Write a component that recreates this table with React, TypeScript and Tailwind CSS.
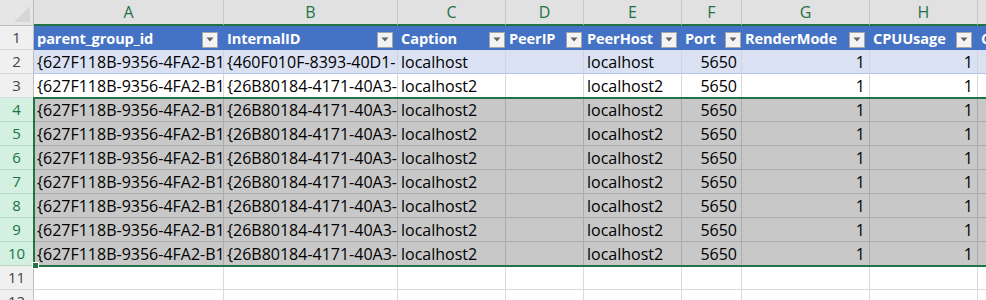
import React from "react";

type Kind = "head" | "band" | "plain" | "sel" | "empty";

const GRID =
  "grid grid-cols-[34px_190px_174px_108px_78px_98px_60px_128px_108px_60px]";

const letters = ["A", "B", "C", "D", "E", "F", "G", "H", "I"];
const rightCols = [5, 6, 7];

// gap between filter button and the column's right edge, as in the sheet
const ddMargin = [
  "mr-[6px]",
  "mr-[5px]",
  "mr-[1px]",
  "mr-[2px]",
  "mr-[5px]",
  "mr-[1px]",
  "mr-[5px]",
  "mr-[6px]",
];

const headers = [
  "parent_group_id",
  "InternalID",
  "Caption",
  "PeerIP",
  "PeerHost",
  "Port",
  "RenderMode",
  "CPUUsage",
  "C",
];

const first = [
  "{627F118B-9356-4FA2-B1",
  "{460F010F-8393-40D1-",
  "localhost",
  "",
  "localhost",
  "5650",
  "1",
  "1",
  "",
];

const second = [
  "{627F118B-9356-4FA2-B1",
  "{26B80184-4171-40A3-",
  "localhost2",
  "",
  "localhost2",
  "5650",
  "1",
  "1",
  "",
];

const empty = ["", "", "", "", "", "", "", "", ""];

const cellKind: Record<Kind, string> = {
  head: "bg-[#4472c4] text-white font-bold text-[14.6px] tracking-[-0.1px]",
  band: "bg-[#d9e1f2] text-black text-[16px] border-r border-b border-r-[#d0d4dc] border-b-[#b4c6e7]",
  plain: "bg-white text-black text-[16px] border-r border-b border-r-[#d9d9d9] border-b-[#d9d9d9]",
  sel: "bg-[#c8c8c8] text-black text-[16px] border-r border-b border-[#ababab]",
  empty: "bg-white border-r border-b border-[#dadada]",
};

function Dropdown({ i }: { i: number }) {
  return (
    <span
      className={`ml-auto ${ddMargin[i]} mt-[2px] flex h-[16px] w-[16px] shrink-0 items-center justify-center border border-[#a6a6a6] bg-[#f3f3f3]`}
    >
      <svg width="8" height="5" viewBox="0 0 8 5">
        <path d="M0.5 0.5 L7.5 0.5 L4 4.5 Z" fill="#606060" />
      </svg>
    </span>
  );
}

function Row({ num, cells, kind }: { num: number; cells: string[]; kind: Kind }) {
  const selected = kind === "sel";
  return (
    <div className={`${GRID} h-[24px]`}>
      <div
        className={
          selected
            ? "flex items-center justify-center border-r border-b border-r-[#217346] border-b-[#b9d9c6] bg-[#d3f0e0] text-[15px] text-[#217346]"
            : "flex items-center justify-center border-r border-b border-r-[#bdbdbd] border-b-[#dadada] bg-[#f0f0f0] text-[15px] text-[#444444]"
        }
      >
        {num}
      </div>
      {cells.map((c, i) => (
        <div
          key={i}
          className={`flex items-center overflow-hidden whitespace-nowrap pl-[3px] pt-[1px] ${cellKind[kind]} ${
            rightCols.includes(i) && kind !== "head" ? "justify-end pr-[4px]" : ""
          }`}
        >
          {kind === "head" ? (
            <>
              <span className="overflow-hidden">{c}</span>
              {i < 8 && <Dropdown i={i} />}
            </>
          ) : (
            c
          )}
        </div>
      ))}
    </div>
  );
}

export default function App() {
  const selRows = [4, 5, 6, 7, 8, 9, 10];
  return (
    <div className="relative h-[300px] w-[986px] overflow-hidden bg-white font-['Open_Sans',sans-serif]">
      {/* column letters */}
      <div className={`${GRID} h-[26px]`}>
        <div className="relative border-r border-b border-[#bdbdbd] bg-[#e6e6e6]">
          <svg className="absolute right-[3px] bottom-[3px]" width="16" height="16" viewBox="0 0 16 16">
            <path d="M16 0 L16 16 L0 16 Z" fill="#d6d6d6" />
          </svg>
        </div>
        {letters.map((l) => (
          <div
            key={l}
            className="flex items-center justify-center border-r border-r-[#c6c6c6] border-b-2 border-b-[#217346] bg-[#e1e1e1] text-[16px] text-[#217346]"
          >
            {l}
          </div>
        ))}
      </div>

      <Row num={1} cells={headers} kind="head" />
      <Row num={2} cells={first} kind="band" />
      <Row num={3} cells={second} kind="plain" />
      {selRows.map((n) => (
        <Row key={n} num={n} cells={second} kind="sel" />
      ))}
      <Row num={11} cells={empty} kind="empty" />
      <Row num={12} cells={empty} kind="empty" />

      {/* selection outline */}
      <div className="pointer-events-none absolute left-[33px] top-[97px] h-[170px] w-[1000px] border-2 border-[#217346]" />
      <div className="pointer-events-none absolute left-[32px] top-[262px] h-[7px] w-[7px] border border-white bg-[#217346]" />
    </div>
  );
}
